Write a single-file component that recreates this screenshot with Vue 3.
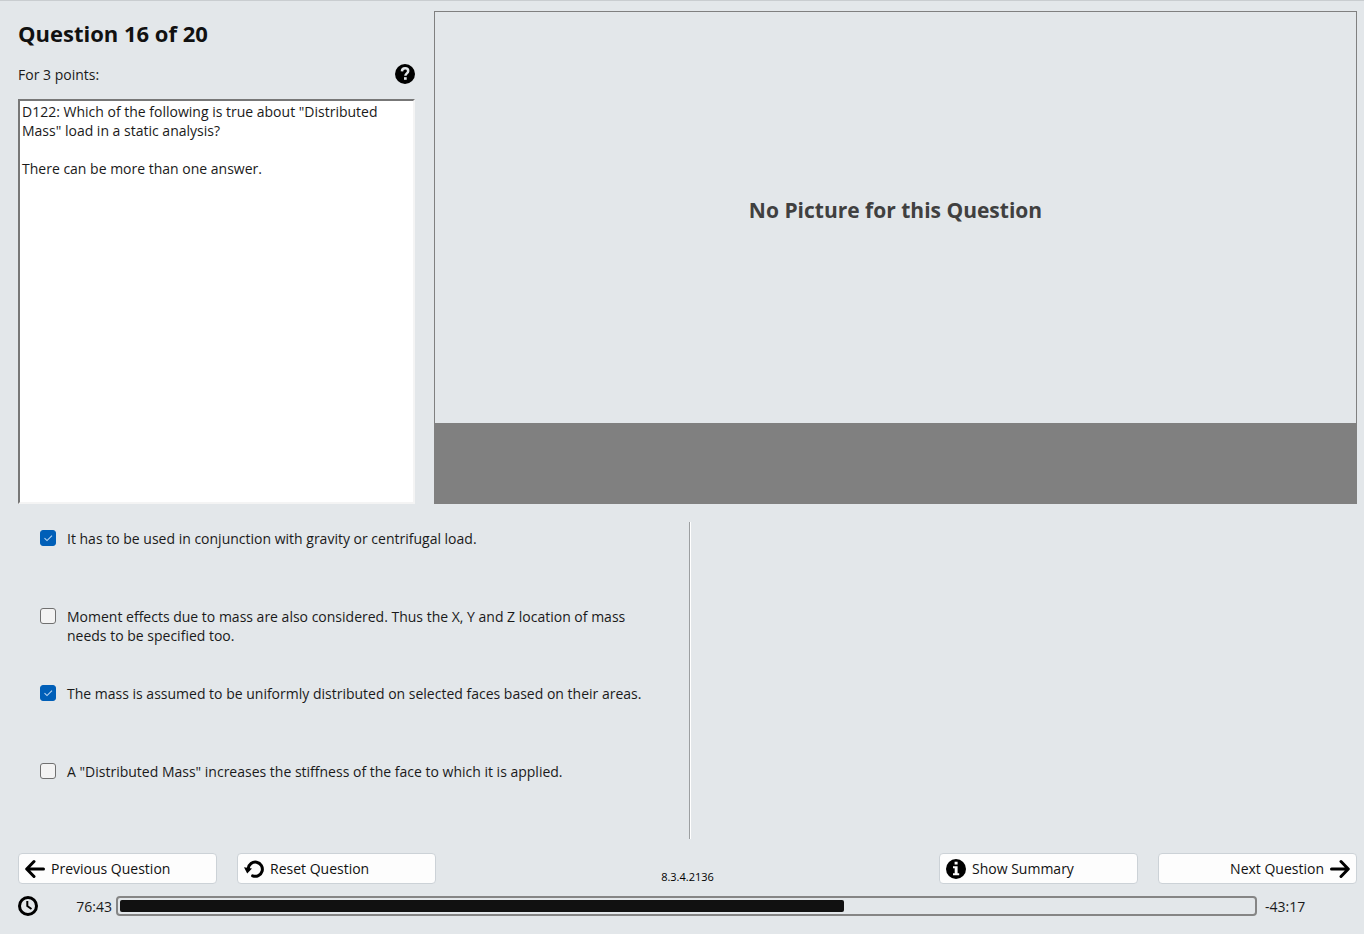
<script setup>
import { ref, computed } from 'vue'

const question = `D122: Which of the following is true about "Distributed Mass" load in a static analysis?

There can be more than one answer.`

const answers = ref([
  { id: 'a', checked: true, text: 'It has to be used in conjunction with gravity or centrifugal load.' },
  { id: 'b', checked: false, text: 'Moment effects due to mass are also considered. Thus the X, Y and Z location of mass needs to be specified too.' },
  { id: 'c', checked: true, text: 'The mass is assumed to be uniformly distributed on selected faces based on their areas.' },
  { id: 'd', checked: false, text: 'A "Distributed Mass" increases the stiffness of the face to which it is applied.' },
])

const elapsed = 76 * 60 + 43
const remaining = 43 * 60 + 17
const progress = computed(() => `${(elapsed / (elapsed + remaining)) * 100}%`)
</script>

<template>
  <main class="exam">
    <section class="top">
      <div class="prompt">
        <h1>Question 16 of 20</h1>
        <div class="points">
          <label for="question">For 3 points:</label>
          <button class="help" type="button" aria-label="Help">
            <svg width="20" height="20" viewBox="0 0 20 20">
              <circle cx="10" cy="10" r="10" fill="#000" />
              <path d="M6.9 7.3C7.1 5.2 8.4 4.3 10.1 4.3c1.8 0 3.1 1.1 3.1 2.7 0 2.4-2.8 2.3-2.8 4.8" fill="none" stroke="#e3e7ea" stroke-width="2.5" />
              <rect x="9" y="13.2" width="2.7" height="2.6" fill="#e3e7ea" />
            </svg>
          </button>
        </div>
        <textarea id="question" class="question" readonly :value="question"></textarea>
      </div>
      <div class="picture">
        <div class="canvas">No Picture for this Question</div>
        <div class="caption"></div>
      </div>
    </section>

    <section class="answers">
      <div class="choices">
        <label v-for="a in answers" :key="a.id" class="choice">
          <span class="tick">
            <input v-model="a.checked" type="checkbox" />
            <svg v-if="a.checked" width="16" height="16" viewBox="0 0 16 16">
              <path d="M4.5 8.2 7 10.6 12 5.6" fill="none" stroke="#b9d6f2" stroke-width="1.1" />
            </svg>
          </span>
          <span>{{ a.text }}</span>
        </label>
      </div>
      <div class="side"></div>
    </section>

    <nav class="actions">
      <div class="group">
        <button type="button" class="btn">
          <svg width="20" height="20" viewBox="0 0 20 20" fill="none" stroke="#000" stroke-width="3" stroke-linecap="round" stroke-linejoin="round">
            <path d="M18.5 10H2.5M9 2.5 1.7 10 9 17.5" />
          </svg>
          Previous Question
        </button>
        <button type="button" class="btn">
          <svg width="20" height="20" viewBox="0 0 20 20">
            <path d="M4.2 9.5A7.1 7.1 0 1 1 8.6 16.8" fill="none" stroke="#000" stroke-width="3" stroke-linecap="round" />
            <path d="M0 8.3 8 9.6 3.2 14.6Z" fill="#000" />
          </svg>
          Reset Question
        </button>
      </div>
      <span class="version">8.3.4.2136</span>
      <div class="group end">
        <button type="button" class="btn">
          <svg width="20" height="20" viewBox="0 0 20 20">
            <circle cx="10" cy="10" r="10" fill="#000" />
            <path d="M8.6 2.8h3v2.8h-3zM7 7.3h4.6v7h1.6v1.9H7v-1.9h1.7V9.2H7z" fill="#fdfdfd" />
          </svg>
          Show Summary
        </button>
        <button type="button" class="btn next">
          Next Question
          <svg width="20" height="20" viewBox="0 0 20 20" fill="none" stroke="#000" stroke-width="3" stroke-linecap="round" stroke-linejoin="round">
            <path d="M1.5 10h16M11 2.5 18.3 10 11 17.5" />
          </svg>
        </button>
      </div>
    </nav>

    <footer class="timer">
      <svg class="clock" width="20" height="20" viewBox="0 0 20 20" fill="none" stroke="#000">
        <circle cx="10" cy="10" r="8.5" stroke-width="3" />
        <path d="M9.3 5v5l4.2 3" stroke-width="2" />
      </svg>
      <span class="elapsed">76:43</span>
      <div class="track" role="progressbar" aria-label="Time used">
        <div class="fill" :style="{ width: progress }"></div>
      </div>
      <span class="left">-43:17</span>
    </footer>
  </main>
</template>

<style>
body {
  background: #e3e7ea;
}
</style>

<style scoped>
.exam {
  box-sizing: border-box;
  min-height: 100vh;
  display: flex;
  flex-direction: column;
  padding: 10px 7px 18px 18px;
  border-top: 1px solid #c9cdd0;
  background: #e3e7ea;
  color: #1a1a1a;
  font: 14px/19px "Open Sans", "Noto Sans", sans-serif;
}
.top {
  display: grid;
  grid-template-columns: 397px 1fr;
  gap: 19px;
  height: 493px;
}
.prompt {
  display: flex;
  flex-direction: column;
}
h1 {
  margin: 8px 0 0;
  font-size: 22px;
  line-height: 28px;
  font-weight: 700;
  color: #111;
}
.points {
  display: flex;
  justify-content: space-between;
  align-items: flex-end;
  height: 20px;
  margin: 17px 0 15px;
}
.help {
  width: 20px;
  height: 20px;
  padding: 0;
  border: 0;
  background: none;
}
svg {
  display: block;
  flex: none;
}
.question {
  box-sizing: border-box;
  flex: 1;
  width: 100%;
  margin: 0;
  padding: 1px 2px;
  border: 2px solid;
  border-color: #777 #f4f4f4 #f4f4f4 #777;
  outline: 0;
  resize: none;
  background: #fff;
  color: #1a1a1a;
  font: inherit;
}
.picture {
  display: flex;
  flex-direction: column;
  border: 1px solid #808080;
}
.canvas {
  flex: 1;
  display: flex;
  align-items: center;
  justify-content: center;
  padding-bottom: 16px;
  font-size: 21px;
  line-height: 28px;
  font-weight: 700;
  color: #404040;
}
.caption {
  height: 80px;
  background: #808080;
}
.answers {
  flex: 1;
  display: grid;
  grid-template-columns: 101fr 100fr;
  margin: 18px 0 14px;
}
.choices {
  padding: 7px 24px 0 22px;
  display: grid;
  grid-template-rows: repeat(4, 1fr);
  border-right: 1px solid #fff;
  box-shadow: inset -1px 0 #9c9fa1;
}
.choice {
  display: flex;
  align-items: flex-start;
  gap: 11px;
}
.tick {
  display: grid;
  flex: none;
  margin-top: 1px;
}
.tick > * {
  grid-area: 1 / 1;
  pointer-events: none;
}
.tick input {
  appearance: none;
  box-sizing: border-box;
  width: 16px;
  height: 16px;
  margin: 0;
  border: 1px solid #707070;
  border-radius: 3px;
  background: #f3f3f3;
}
.tick input:checked {
  border-color: #005fb8;
  background: #005fb8;
}
.actions {
  display: grid;
  grid-template-columns: 1fr auto 1fr;
  align-items: center;
}
.group {
  display: flex;
  gap: 20px;
}
.end {
  justify-content: flex-end;
}
.btn {
  box-sizing: border-box;
  display: flex;
  align-items: center;
  gap: 6px;
  width: 199px;
  height: 31px;
  padding: 0 6px;
  border: 1px solid #ccd2d7;
  border-radius: 4px;
  background: #fdfdfd;
  color: #111;
  font: inherit;
}
.next {
  justify-content: flex-end;
}
.version {
  padding-top: 16px;
  font-size: 11px;
  line-height: 13px;
  color: #000;
}
.timer {
  display: flex;
  align-items: center;
  margin-top: 12px;
}
.elapsed {
  width: 74px;
  text-align: right;
}
.track {
  box-sizing: border-box;
  flex: 1;
  height: 20px;
  margin: 0 8px 0 4px;
  padding: 2px;
  border: 2px solid #858585;
  border-radius: 4px;
}
.fill {
  height: 12px;
  border-radius: 2px;
  background: #111;
}
.left {
  width: 92px;
}
</style>
